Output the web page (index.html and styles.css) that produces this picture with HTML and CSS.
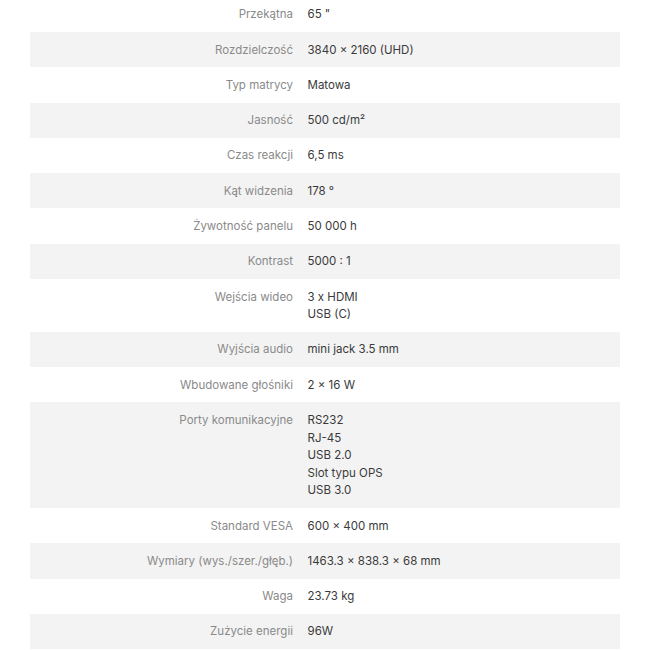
FILE: index.html
```html
<!DOCTYPE html>
<html lang="pl">
<head>
<meta charset="utf-8">
<link rel="stylesheet" href="styles.css">
</head>
<body>
<table class="specs">
  <tbody>
    <tr><th>Przekątna</th><td>65 "</td></tr>
    <tr><th>Rozdzielczość</th><td>3840 × 2160 (UHD)</td></tr>
    <tr><th>Typ matrycy</th><td>Matowa</td></tr>
    <tr><th>Jasność</th><td>500 cd/m²</td></tr>
    <tr><th>Czas reakcji</th><td>6,5 ms</td></tr>
    <tr><th>Kąt widzenia</th><td>178 °</td></tr>
    <tr><th>Żywotność panelu</th><td>50 000 h</td></tr>
    <tr><th>Kontrast</th><td>5000 : 1</td></tr>
    <tr><th>Wejścia wideo</th><td>3 x HDMI<br>USB (C)</td></tr>
    <tr><th>Wyjścia audio</th><td>mini jack 3.5 mm</td></tr>
    <tr><th>Wbudowane głośniki</th><td>2 × 16 W</td></tr>
    <tr><th>Porty komunikacyjne</th><td>RS232<br>RJ-45<br>USB 2.0<br>Slot typu OPS<br>USB 3.0</td></tr>
    <tr><th>Standard VESA</th><td>600 × 400 mm</td></tr>
    <tr><th>Wymiary (wys./szer./głęb.)</th><td>1463.3 × 838.3 × 68 mm</td></tr>
    <tr><th>Waga</th><td>23.73 kg</td></tr>
    <tr><th>Zużycie energii</th><td>96W</td></tr>
  </tbody>
</table>
</body>
</html>
```

FILE: styles.css
```css
html, body {
  margin: 0;
  padding: 0;
  background: #ffffff;
}
body {
  overflow: hidden;
  font-family: Inter, "Noto Sans", sans-serif;
  font-size: 11.5px;
}
.specs {
  width: 590px;
  margin: -3.3px 0 0 30px;
  border-collapse: collapse;
}
.specs tr:nth-child(even) {
  background: #f3f3f3;
}
.specs th,
.specs td {
  padding: 9.6px 0 8.1px;
  line-height: 17.6px;
  vertical-align: top;
}
.specs th {
  width: 263px;
  padding-right: 14.5px;
  text-align: right;
  font-weight: 400;
  color: #8a8a8a;
}
.specs td {
  color: #3a3a3a;
  text-align: left;
}
```
